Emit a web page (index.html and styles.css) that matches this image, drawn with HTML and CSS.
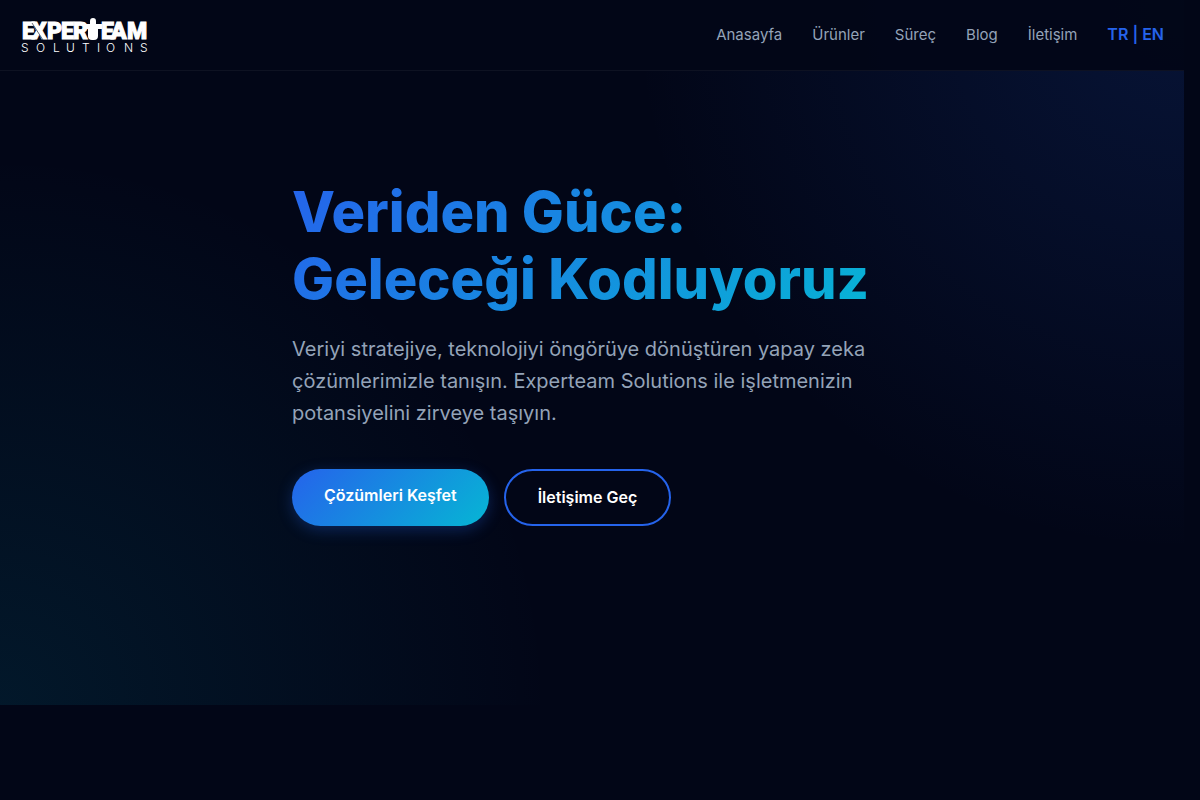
FILE: index.html
```html
<!DOCTYPE html>
<html lang="tr">
<head>
    <meta charset="UTF-8">
    <meta name="viewport" content="width=device-width, initial-scale=1.0">
    <title>Experteam Solutions</title>
    <link rel="stylesheet" href="styles.css">
</head>
<body>
    <header>
        <a href="#" class="logo" aria-label="Experteam Solutions">
            <svg width="130" height="40" viewBox="0 0 130 40">
                <g class="logo-main">
                    <text x="2 12 27 41 53" y="24">EXPER</text>
                    <text x="81 91 107" y="24">EAM</text>
                </g>
                <path class="logo-cut" d="M12 8 L23 25"/>
                <!-- insan figürü -->
                <path d="M73 3 C75 3 76 4 76 6 V9 H82 V14 H78 V21 Q78 25 74 25 H72 Q68 25 68 21 V14 H64 V9 H70 V6 C70 4 71 3 73 3 Z" fill="#fff"/>
                <text class="logo-sub" x="1 16 33 46 62 77 86 104 120" y="37">SOLUTIONS</text>
            </svg>
        </a>
        <nav>
            <a href="#">Anasayfa</a>
            <a href="#urunler">Ürünler</a>
            <a href="#surec">Süreç</a>
            <a href="#blog">Blog</a>
            <a href="#iletisim">İletişim</a>
            <a href="#en" class="lang-switch">TR | EN</a>
        </nav>
    </header>

    <section class="hero">
        <div class="hero-content">
            <h1>Veriden Güce:<br>Geleceği Kodluyoruz</h1>
            <p>Veriyi stratejiye, teknolojiyi öngörüye dönüştüren yapay zeka çözümlerimizle tanışın. Experteam Solutions ile işletmenizin potansiyelini zirveye taşıyın.</p>
            <div class="hero-buttons">
                <a href="#urunler" class="btn btn-primary">Çözümleri Keşfet</a>
                <a href="#iletisim" class="btn btn-outline">İletişime Geç</a>
            </div>
        </div>
    </section>
</body>
</html>
```
FILE: styles.css
```css
:root {
    --primary-color: #2563eb;
    --secondary-color: #06b6d4;
    --background-color: #020617;
    --text-color: #94a3b8;
}

* {
    box-sizing: border-box;
}

body {
    font-family: 'Inter', sans-serif;
    margin: 0;
    padding: 0 16px 0 0;
    background-color: var(--background-color);
    color: var(--text-color);
}

a {
    text-decoration: none;
}

header {
    position: sticky;
    top: 0;
    z-index: 10;
    height: 71px;
    margin-bottom: -71px;
    padding: 0 20px;
    display: flex;
    justify-content: space-between;
    align-items: center;
    background: rgba(2, 6, 23, 0.95);
    border-bottom: 1px solid rgba(255, 255, 255, 0.05);
}

.logo svg {
    display: block;
}

.logo-main {
    font-family: 'Roboto', sans-serif;
    font-weight: 900;
    font-size: 23px;
    fill: #fff;
    stroke: #fff;
    stroke-width: 1px;
}

.logo-cut {
    stroke: var(--background-color);
    stroke-width: 1px;
    opacity: 0.6;
}

.logo-sub {
    font-weight: 300;
    font-size: 12px;
    fill: #fff;
}

nav {
    display: flex;
    align-items: baseline;
    gap: 30px;
    padding-bottom: 2px;
}

nav a {
    color: var(--text-color);
    font-size: 15px;
    line-height: 24px;
}

nav .lang-switch {
    color: var(--primary-color);
    font-size: 16px;
    font-weight: 600;
}

.hero {
    min-height: 705px;
    padding: 100px 20px;
    display: flex;
    align-items: center;
    justify-content: center;
    background:
        radial-gradient(circle at top right, rgba(37, 99, 235, 0.15), transparent 40%),
        radial-gradient(circle at bottom left, rgba(6, 182, 212, 0.1), transparent 40%);
}

.hero-content {
    width: 100%;
    max-width: 600px;
}

h1 {
    margin: 0 0 20px;
    font-size: 56px;
    font-weight: 800;
    line-height: 67px;
    background: linear-gradient(135deg, var(--primary-color), var(--secondary-color));
    -webkit-background-clip: text;
    background-clip: text;
    color: transparent;
}

.hero p {
    margin: 0 0 40px;
    font-size: 20px;
    line-height: 32px;
}

.hero-buttons {
    display: flex;
    gap: 15px;
}

.btn {
    padding: 14px 32px;
    border-radius: 50px;
    color: #fff;
    font-size: 16px;
    font-weight: 600;
    line-height: 25px;
}

.btn-primary {
    background: linear-gradient(135deg, var(--primary-color), var(--secondary-color));
    box-shadow: 0 4px 15px rgba(37, 99, 235, 0.3);
}

.btn-outline {
    border: 2px solid var(--primary-color);
}

@media (max-width: 768px) {
    nav {
        display: none;
    }

    h1 {
        font-size: 40px;
        line-height: 48px;
    }

    .hero-buttons {
        flex-wrap: wrap;
    }
}
```
